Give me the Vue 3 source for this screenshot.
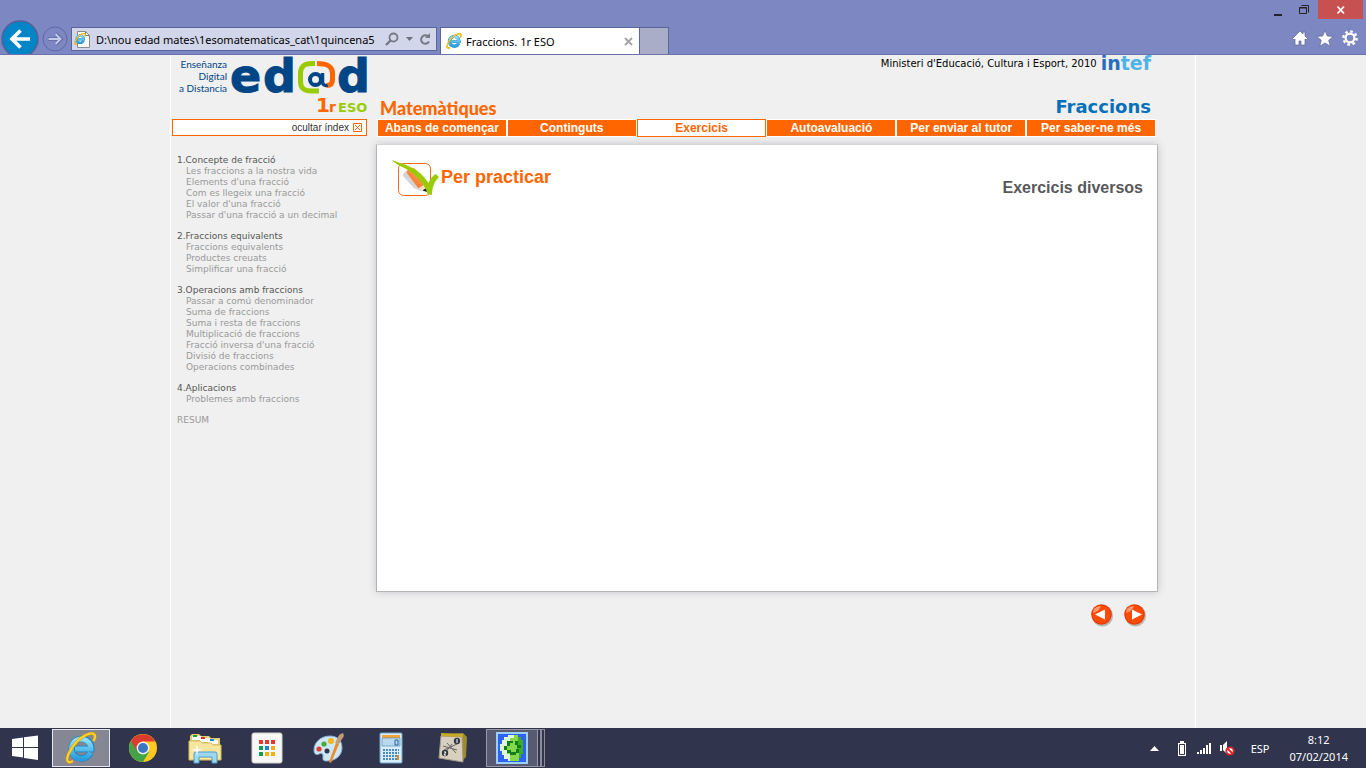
<script setup>
import { ref } from 'vue'

const address = ref('D:\\nou edad mates\\1esomatematicas_cat\\1quincena5')

const tabs = [
  'Abans de començar',
  'Continguts',
  'Exercicis',
  'Autoavaluació',
  'Per enviar al tutor',
  'Per saber-ne més',
]
const activeTab = ref('Exercicis')

const sections = [
  {
    title: '1.Concepte de fracció',
    items: [
      'Les fraccions a la nostra vida',
      "Elements d'una fracció",
      'Com es llegeix una fracció',
      "El valor d'una fracció",
      "Passar d'una fracció a un decimal",
    ],
  },
  {
    title: '2.Fraccions equivalents',
    items: ['Fraccions equivalents', 'Productes creuats', 'Simplificar una fracció'],
  },
  {
    title: '3.Operacions amb fraccions',
    items: [
      'Passar a comú denominador',
      'Suma de fraccions',
      'Suma i resta de fraccions',
      'Multiplicació de fraccions',
      "Fracció inversa d'una fracció",
      'Divisió de fraccions',
      'Operacions combinades',
    ],
  },
  { title: '4.Aplicacions', items: ['Problemes amb fraccions'] },
]

const storeDots = ['#e8392e', '#e8392e', '#e8392e', '#109d59', '#1a82e2', '#f7b10a', '#109d59', '#f7b10a', '#f7b10a']
</script>

<template>
  <div class="screen">
    <svg class="defs" aria-hidden="true">
      <defs>
        <linearGradient id="ieBlue" x1="0" y1="0" x2="0" y2="1">
          <stop offset="0" stop-color="#8fe0fb" /><stop offset="1" stop-color="#2a9fdd" />
        </linearGradient>
        <linearGradient id="pencil" x1="0" y1="1" x2="1" y2="0">
          <stop offset="0" stop-color="#f2590a" /><stop offset=".5" stop-color="#ff8f45" /><stop offset="1" stop-color="#ffd0a6" />
        </linearGradient>
        <symbol id="ie" viewBox="0 0 32 32">
          <path d="M25.5 20.5A9.8 9.8 0 1 1 26.3 17H10" fill="none" stroke="#1d83bf" stroke-width="6.400" />
          <path d="M25.3 20.5A9.8 9.8 0 1 1 26 17H10" fill="none" stroke="url(#ieBlue)" stroke-width="5" />
          <path d="M8 29C3 32 .5 29 3.500 22 8 12 17 3 25.500 1.500 30 .8 31.500 4 28.500 9" fill="none" stroke="#d89d00" stroke-width="3" />
          <path d="M8 29C3 32 .5 29 3.500 22 8 12 17 3 25.500 1.500 30 .8 31.500 4 28.500 9" fill="none" stroke="#ffd32b" stroke-width="2" />
        </symbol>
      </defs>
    </svg>

    <header class="chrome">
      <div class="caption">
        <button class="cap" aria-label="Minimitza"><svg width="10" height="12"><path d="M1 10h8v2H1z" fill="#222" /></svg></button>
        <button class="cap" aria-label="Restaura">
          <svg width="12" height="12" fill="none" stroke="#222"><path d="M1.500 3.500h7v6h-7zM1 4h8M3.500 1.500h7v7" /></svg>
        </button>
        <button class="cap close" aria-label="Tanca">
          <svg width="10" height="10"><path d="M1.500 1.500l6.500 7M8 1.500l-6.500 7" stroke="#fff" stroke-width="1.800" /></svg>
        </button>
      </div>
      <div class="toolbar">
        <button class="back" aria-label="Enrere">
          <svg width="38" height="38" viewBox="0 0 38 38">
            <circle cx="19" cy="19" r="18" fill="#0185c6" stroke="#565f97" stroke-width="1.500" />
            <path d="M11 19h18M19.500 10.500L11 19l8.500 8.500" fill="none" stroke="#fff" stroke-width="3.600" />
          </svg>
        </button>
        <button class="fwd" aria-label="Endavant">
          <svg width="26" height="26" viewBox="0 0 26 26">
            <circle cx="13" cy="13" r="12" fill="none" stroke="#5f68a4" />
            <path d="M6 13h13M13.500 7.500L19 13l-5.500 5.500" fill="none" stroke="#5f68a4" stroke-width="3.600" />
            <path d="M6.500 13h12M13.500 8L18.500 13l-5 5" fill="none" stroke="#c5cae8" stroke-width="2" />
          </svg>
        </button>
        <div class="address">
          <svg width="16" height="17" viewBox="0 0 16 17">
            <path d="M3.500 .5h8l4 4v12h-12z" fill="#fff" stroke="#8a8a8a" /><path d="M11.500 .5v4h4" fill="none" stroke="#777" />
            <use href="#ie" x="0" y="2" width="12" height="12" />
          </svg>
          <input v-model="address" aria-label="Adreça" />
          <button aria-label="Cerca">
            <svg width="14" height="14" viewBox="0 0 14 14" fill="none" stroke="#777987"><circle cx="8.500" cy="5.500" r="4" stroke-width="1.800" /><path d="M5.500 8.500L1 13" stroke-width="2.400" /></svg>
          </button>
          <button aria-label="Opcions de cerca"><svg width="8" height="5"><path d="M1 0h7L4.500 4z" fill="#6d6f7d" /></svg></button>
          <button aria-label="Actualitza">
            <svg width="12" height="13" viewBox="0 0 12 13"><path d="M9 3.300A4.200 4.200 0 1 0 10 8.500" fill="none" stroke="#777987" stroke-width="2" /><path d="M6 5h5V0z" fill="#777987" /></svg>
          </button>
        </div>
        <div class="tab">
          <svg width="16" height="16"><use href="#ie" /></svg>
          <span>Fraccions. 1r ESO</span>
          <button aria-label="Tanca la pestanya"><svg width="9" height="9"><path d="M1 1l7 7M8 1L1 8" stroke="#a5a5a5" stroke-width="2" /></svg></button>
        </div>
        <button class="newtab" aria-label="Pestanya nova"></button>
        <div class="tools">
          <button aria-label="Inici">
            <svg width="16" height="16" viewBox="0 0 16 16"><path d="M8 1L.5 8.500 2 10l1-1v6h4v-4h2v4h4V9l1 1 1.500-1.500-2.500-2.500V2h-2v2z" fill="#fff" stroke="#5b6497" stroke-width=".7" /></svg>
          </button>
          <button aria-label="Preferits">
            <svg width="18" height="17" viewBox="0 0 18 17"><path d="M9 .5l2.300 5.500 6 .4-4.600 3.900 1.600 6-5.300-3.400-5.300 3.400 1.600-6L.7 6.400l6-.4z" fill="#fff" stroke="#5b6497" stroke-width=".7" /></svg>
          </button>
          <button aria-label="Eines">
            <svg width="16" height="16" viewBox="0 0 16 16"><circle cx="8" cy="8" r="6.600" fill="none" stroke="#fff" stroke-width="2.400" stroke-dasharray="2.600 2.580" /><circle cx="8" cy="8" r="4.400" fill="none" stroke="#fff" stroke-width="2.200" /></svg>
          </button>
        </div>
      </div>
    </header>

    <div class="viewport">
      <div class="page">
        <aside class="side">
          <svg class="logo" viewBox="0 0 196 60" width="196" height="60" role="img" aria-label="Enseñanza Digital a Distancia, edad, 1r ESO">
            <g class="motto" text-anchor="end">
              <text x="55" y="13">Enseñanza</text><text x="55" y="25">Digital</text><text x="55" y="37">a Distancia</text>
            </g>
            <g class="word"><text x="58" y="37">e</text><text x="91" y="37">d</text><text x="165" y="37">d</text></g>
            <path d="M143 8.500h-3c-8 0-11.500 3-11.500 10v8c0 7 4 9.500 11.500 9.500h7" fill="none" stroke="#99cc00" stroke-width="5" />
            <path d="M145 8.500c11 0 15.500 3 15.500 10v6c0 4-2 6-6 6" fill="none" stroke="#ff6600" stroke-width="5" />
            <circle cx="143.500" cy="24.500" r="5.500" fill="none" stroke="#004586" stroke-width="4" />
            <path d="M150.500 18v9c0 3 3 4 5 3" fill="none" stroke="#004586" stroke-width="3.500" />
            <text class="one" x="144" y="57">1</text><text class="rr" x="157" y="57">r</text><text class="eso" x="166" y="57">ESO</text>
          </svg>
          <button class="hide">
            <span>ocultar índex</span>
            <svg width="9" height="9"><path d="M.5.5h8v8h-8zM2 2l5 5M7 2L2 7" fill="none" stroke="#f60" /></svg>
          </button>
          <nav class="index" aria-label="Índex">
            <section v-for="s in sections" :key="s.title">
              <h2>{{ s.title }}</h2>
              <ul><li v-for="i in s.items" :key="i"><a href="#">{{ i }}</a></li></ul>
            </section>
            <a href="#">RESUM</a>
          </nav>
        </aside>

        <main>
          <div class="credit">
            <span>Ministeri d'Educació, Cultura i Esport, 2010</span>
            <span class="intef"><b>in</b>tef</span>
          </div>
          <div class="titles"><span class="subject">Matemàtiques</span><h1>Fraccions</h1></div>
          <nav class="tabs" aria-label="Apartats">
            <a v-for="t in tabs" :key="t" href="#" :class="{ on: t === activeTab }" @click.prevent="activeTab = t">{{ t }}</a>
          </nav>
          <article class="panel">
            <svg width="48" height="38" viewBox="0 0 48 38">
              <rect x="6.500" y="3.500" width="32" height="32" rx="5" fill="#fff" stroke="#f26a1b" />
              <path d="M11 14l5-5 20 20-7 2-7-3-11-12z" fill="#d4d4d4" />
              <path d="M14.500 12.500q0-2 3-3l5-1.500L36 25l-9 4z" fill="url(#pencil)" />
              <path d="M26 28.500L35 23l2 10z" fill="#ffe2bd" /><path d="M30.500 30.500l4.500-3 2 5z" fill="#101038" />
              <path d="M0 0l8 3c14 4 22 10 28.500 20 1.500-4 4-7 7-9l3.500 3c-5 5-7 11-7 18l-4.500-1C34 27 27 17 16 10 10 6 4 5 0 0z" fill="#99cc00" />
            </svg>
            <h2>Per practicar</h2>
            <h3>Exercicis diversos</h3>
          </article>
          <div class="pager">
            <button v-for="d in ['prev', 'next']" :key="d" :aria-label="d === 'prev' ? 'Anterior' : 'Següent'">
              <svg width="24" height="24" viewBox="0 0 24 24">
                <circle cx="12.500" cy="13" r="10.500" fill="#b9b9b9" /><circle cx="11.500" cy="11.500" r="10.300" fill="#e63c00" /><circle cx="11.500" cy="11.500" r="9" fill="#ff4b08" />
                <path d="M3 10c0-5 4-7 8-7-2 4-4 6-8 7z" fill="#ff9a70" />
                <path :d="d === 'prev' ? 'M5 11.500l10-5v10z' : 'M19 11.500l-10-5v10z'" fill="#fff" />
              </svg>
            </button>
          </div>
        </main>
      </div>
    </div>

    <footer class="taskbar">
      <button class="start" aria-label="Inicia">
        <svg width="28" height="26" viewBox="0 0 28 26"><path d="M1 4l11-1.500V12H1zM13 2.300L27 .5V12H13zM1 13h11v9.500L1 21zM13 13h14v12l-14-2z" fill="#fff" /></svg>
      </button>
      <div class="apps">
        <button class="app current" aria-label="Internet Explorer"><svg width="32" height="32"><use href="#ie" /></svg></button>
        <button class="app" aria-label="Chrome">
          <svg width="30" height="30" viewBox="0 0 30 30">
            <circle cx="15" cy="15" r="14" fill="#fcca1f" /><path d="M15 15L2.900 8A14 14 0 0 0 15 29l6-10z" fill="#43a447" /><path d="M3 8A14 14 0 0 1 27.300 8.500H15L9 18z" fill="#dd3b2d" /><circle cx="15" cy="15" r="6.400" fill="#f5f5f5" /><circle cx="15" cy="15" r="5" fill="#3b78c3" />
          </svg>
        </button>
        <button class="app" aria-label="Explorador de fitxers">
          <svg width="34" height="32" viewBox="0 0 34 32">
            <path d="M2 28V4l2-2h7l2 2h8l2 2h9v22z" fill="#e6cc72" /><path d="M4 4h9v4H4zM12 6h10v4H12zM20 8h10v4H20z" fill="#fff" /><path d="M5 3h4v2H5z" fill="#1fa02b" /><path d="M13 5h4v2h-4z" fill="#d4352a" /><path d="M22 7h4v2h-4z" fill="#2188d6" />
            <path d="M1 9h11l2 2h9l2 2h8v15H1z" fill="#f7e6a0" stroke="#d7b95b" /><path d="M6 31V22q0-2 2-2h19q2 0 2 2v9h-5v-6H11v6z" fill="#9fd7ee" stroke="#4e9fc7" /><path d="M9 12l1 5 5 1-5 1-1 5-1-5-5-1 5-1z" fill="#fff" />
          </svg>
        </button>
        <button class="app" aria-label="Aplicacions">
          <svg width="32" height="32" viewBox="0 0 32 32"><rect x="1" y="1" width="30" height="30" rx="2" fill="#f7f7f7" stroke="#d2d2d2" /><rect v-for="(c, i) in storeDots" :key="i" :x="8 + (i % 3) * 6" :y="8 + Math.floor(i / 3) * 6" width="4" height="4" :fill="c" /></svg>
        </button>
        <button class="app" aria-label="Paint">
          <svg width="32" height="32" viewBox="0 0 32 32">
            <path d="M17 4C7 4 1 11 1 18c0 5 3 5 5 4s4-1 4 2-1 5 4 5c9 0 15-6 15-13 0-8-5-12-12-12z" fill="#cfe6f5" stroke="#7fb1d3" /><circle cx="6" cy="17" r="2.600" fill="#df3e32" /><circle cx="11" cy="12" r="2.600" fill="#46ad38" /><circle cx="18" cy="9" r="3" fill="#f5b51b" /><circle cx="14" cy="19" r="2.500" fill="#31364f" /><path d="M23 11l3 1-8 19-2-1z" fill="#ed8b28" /><path d="M22 11l3-6q1-3 5-4 2 3-1 6l-3 5z" fill="#c39a72" />
          </svg>
        </button>
        <button class="app" aria-label="Calculadora">
          <svg width="24" height="32" viewBox="0 0 24 32"><rect x="1" y="1" width="22" height="30" rx="1" fill="#d8edf9" stroke="#6fa6cc" /><path d="M3 3h18v3H3z" fill="#f3a23a" /><path d="M3 6h18v8H3z" fill="#b9d9ee" stroke="#5b8fb8" stroke-width=".7" /><path d="M16 8h3v5h-3z" fill="none" stroke="#27649b" /><path d="M4 18h16M4 21h16M4 24h16M4 27h16" stroke="#4b8cbd" stroke-width="2" stroke-dasharray="2 1" /><path d="M18 23h2v5h-2z" fill="#ed8b1d" /></svg>
        </button>
        <button class="app" aria-label="Visor">
          <svg width="32" height="32" viewBox="0 0 32 32"><path d="M6 2l20-1 4 4-1 20-5 5z" fill="#9d8b2c" /><path d="M4 4l21 1 1 25-24-4z" fill="#d7d0bf" stroke="#a39b87" /><path d="M4 1l22 1v3L4 4z" fill="#c7aa28" /><path d="M6 14l14 4M7 18l13-6M10 11l9 10M8 21l7-9" stroke="#666" fill="none" /><circle cx="20" cy="9" r="3.200" fill="#333941" /><circle cx="8" cy="21" r="3.200" fill="#333941" /><path d="M20 7v4M7 20h2l-2 3h2" stroke="#fff" fill="none" /></svg>
        </button>
        <button class="app stack" aria-label="Descartes">
          <svg width="32" height="32" viewBox="0 0 32 32"><path d="M0 0h32v32H0z" fill="#9bd0fb" /><path d="M2 2h28v28H2z" fill="#2f62f2" /><path d="M12 3h10v2h3v3h2v14h-2v4h-2v3H12v-2H8v-4H6v-4H4V12h2V8h2V5h4z" fill="#84d94a" /><path d="M12 3h6v3h-4v4h-3v12h3v7h-2v-2H8v-4H6v-4H4V12h2V8h2V5h4z" fill="#dff7d8" /><path d="M22 5h3v3h2v14h-2v4h-2v-8h-2V9h1z" fill="#3fae1c" /><path d="M11 9h6v2h-3v3h-3zM19 9h3v4h3v3h-4v-3h-2zM8 14h3v4H8zM11 18h4v2h5v-3h3v4h-3v2h-6v-2h-3z" fill="#117d1f" /></svg>
        </button>
      </div>
      <div class="tray">
        <button aria-label="Icones ocultes"><svg width="9" height="5"><path d="M0 5L4.500 0 9 5z" fill="#fff" /></svg></button>
        <svg class="battery" width="10" height="15" viewBox="0 0 10 15"><path d="M3 0h4v2h2v13H1V2h2z" fill="#fff" /><path d="M2.500 3.500h5v10h-5z" fill="#fff" stroke="#2f334a" /></svg>
        <svg class="signal" width="16" height="13" viewBox="0 0 16 13"><path d="M1 10h2v2H1zM4 8h2v4H4zM7 6h2v6H7zM10 3h2v9h-2zM13 1h2v11h-2z" fill="#fff" /></svg>
        <svg class="sound" width="16" height="15" viewBox="0 0 16 15"><path d="M1 4h2v6H1zM4 4l4-4v13l-4-4z" fill="#fff" /><circle cx="11" cy="10" r="3.700" fill="#fff" stroke="#e0232a" stroke-width="1.800" /><path d="M8.500 7.500l5 5" stroke="#e0232a" stroke-width="1.800" /></svg>
        <span class="lang">ESP</span>
        <div class="clock"><time>8:12</time><time>07/02/2014</time></div>
      </div>
    </footer>
  </div>
</template>

<style>
body { margin: 0; background: #f0f0f0; }
</style>

<style scoped>
* { box-sizing: border-box; }
button { margin: 0; padding: 0; border: 0; background: none; display: flex; align-items: center; justify-content: center; }
svg { display: block; flex: none; }
h1, h2, h3, ul { margin: 0; padding: 0; list-style: none; }
a { color: inherit; text-decoration: none; }
.screen { display: flex; flex-direction: column; min-height: 100vh; font-family: "Noto Sans", "Open Sans", sans-serif; }
.defs { position: absolute; width: 0; height: 0; }

.chrome { background: #7d88c3; border-bottom: 1px solid #6a73ab; height: 55px; overflow: hidden; }
.caption { display: flex; justify-content: flex-end; height: 20px; padding-right: 3px; }
.cap { width: 26px; height: 19px; }
.cap.close { width: 45px; background: #c75050; margin-left: 1px; }
.toolbar { display: flex; height: 34px; padding-left: 1px; }
.back { width: 38px; height: 38px; }
.fwd { width: 26px; height: 26px; margin: 6px 3px 0; }
.address { display: flex; align-items: center; gap: 6px; width: 366px; height: 24px; margin-top: 7px; padding: 0 5px 0 2px; background: #d2d6eb; border: 1px solid #5c6599; }
.address input { flex: 1; min-width: 0; border: 0; padding: 0; background: none; color: #000; font: 11px "Noto Sans", sans-serif; }
.tab { display: flex; align-items: center; gap: 4px; width: 200px; margin: 7px 0 0 3px; padding: 0 6px 0 5px; background: #fff; border: 1px solid #5c6599; border-bottom: 0; font-size: 11px; white-space: nowrap; }
.tab button { margin-left: auto; }
.newtab { width: 29px; margin-top: 7px; background: #a9adc7; border: 1px solid #5c6599; border-width: 1px 1px 0 0; }
.tools { display: flex; align-items: center; gap: 8px; margin-left: auto; padding: 2px 8px 0 0; }

.viewport { display: flex; flex: 1; background: #f0f0f0; }
.page { display: grid; grid-template-columns: 195px 1fr; gap: 9px; width: 100%; max-width: 1026px; margin: 0 auto; padding: 0 37px 0 1px; border: 1px solid #fff; border-width: 0 1px; }

.logo { overflow: visible; }
.motto { font: 10px Lato, sans-serif; fill: #004586; }
.word { font: bold 46px "DejaVu Sans", sans-serif; fill: #004586; stroke: #004586; }
.one { font: bold 20px "DejaVu Sans", sans-serif; fill: #f60; }
.rr { font: bold 14px "DejaVu Sans", sans-serif; fill: #f60; }
.eso { font: bold 13px "DejaVu Sans", sans-serif; fill: #9c0; }
.hide { justify-content: flex-end; gap: 4px; width: 100%; height: 17px; margin-top: 4px; padding-right: 4px; background: #fff; border: 1px solid #f60; color: #333; font: 10px "Liberation Sans", sans-serif; }
.index { display: flex; flex-direction: column; gap: 10px; margin-top: 19px; padding-left: 5px; color: #999; font: 9px/11px "DejaVu Sans", sans-serif; white-space: nowrap; }
.index h2 { font: inherit; color: #555; }
.index ul { padding-left: 9px; }

main { min-width: 0; display: flex; flex-direction: column; }
.credit { display: flex; justify-content: flex-end; gap: 4px; height: 17px; padding-right: 7px; color: #000; font: 10px/17px "DejaVu Sans", sans-serif; }
.intef { color: #4fb3e8; font: bold 19px/17px "DejaVu Sans", sans-serif; }
.intef b { color: #2a6ebb; }
.titles { display: flex; justify-content: space-between; align-items: flex-end; height: 47px; padding: 0 7px 0 4px; }
.subject { color: #f60; font: 900 18px/22px Lato, sans-serif; }
h1 { color: #0670b8; font: bold 18px/24px "DejaVu Sans", sans-serif; }
.tabs { display: grid; grid-template-columns: repeat(6, 1fr); height: 18px; padding: 0 2px 0 1px; }
.tabs a { display: block; border: 1px solid #fff; background: #f60; color: #fff; text-align: center; white-space: nowrap; font: bold 12px/16px "Liberation Sans", sans-serif; }
.tabs a.on { background: #fff; color: #f60; border-color: #f60; }
.panel { display: flex; align-items: flex-start; min-height: 448px; margin-top: 7px; padding: 15px 14px 0 15px; background: #fff; border: 1px solid #b4b4b4; border-top-color: #d6d6d6; box-shadow: 0 0 8px #c4c4cc; font-family: "Liberation Sans", sans-serif; }
.panel h2 { margin: 7px 0 0 1px; color: #f60; font-size: 18px; line-height: 20px; }
.panel h3 { margin: 18px 0 0 auto; color: #58585a; font-size: 16px; line-height: 20px; }
.pager { display: flex; justify-content: flex-end; gap: 9px; margin-top: 11px; padding-right: 11px; }

.taskbar { display: flex; height: 40px; background: #30344c; color: #fff; font-size: 12px; }
.start { width: 52px; padding-right: 2px; }
.apps { display: flex; gap: 4px; }
.app { width: 58px; height: 40px; }
.app.current { height: 38px; margin-top: 1px; background: #858795; border: 1px solid #e8e8ec; }
.app.stack { width: 52px; height: 38px; margin-top: 1px; padding-right: 1px; background: #575a70; border: 1px solid #9698a6; box-shadow: 3px 0 0 -1px #30344c, 4px 0 0 #8a8c9b, 7px 0 0 -1px #30344c, 7px 0 0 #8a8c9b; }
.tray { display: flex; align-items: center; margin-left: auto; padding-right: 18px; }
.battery { margin-left: 18px; }
.signal { margin-left: 9px; }
.sound { margin-left: 7px; }
.lang { margin-left: 16px; font-size: 11px; }
.clock { display: flex; flex-direction: column; align-items: center; margin-left: 20px; font-size: 11px; line-height: 17px; }
</style>
